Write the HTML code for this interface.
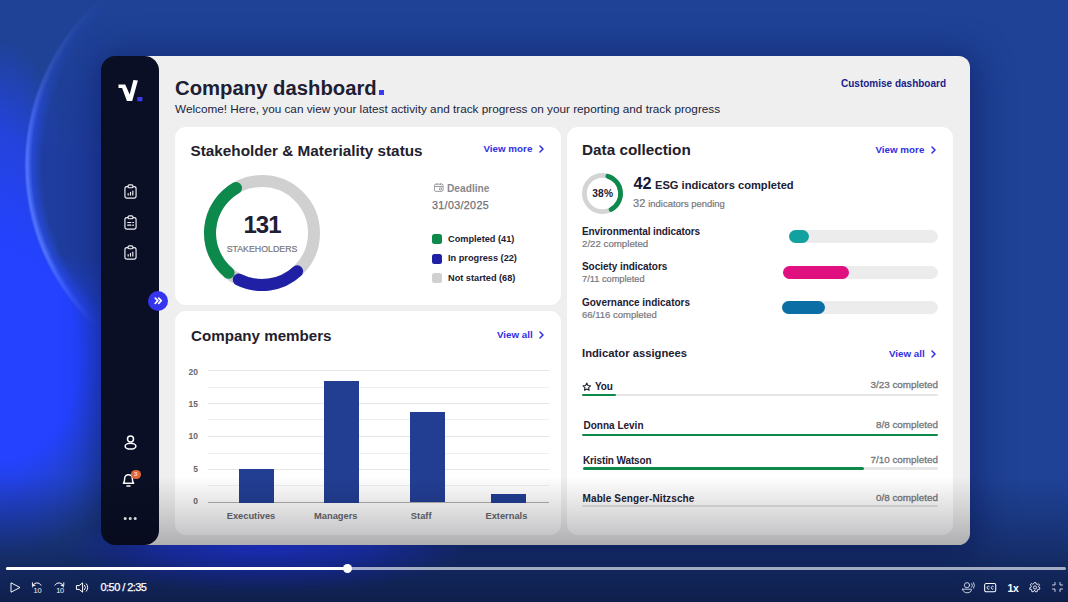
<!DOCTYPE html>
<html><head><meta charset="utf-8">
<style>
*{box-sizing:border-box;margin:0;padding:0}
html,body{width:1068px;height:602px;overflow:hidden}
body{font-family:"Liberation Sans",sans-serif;position:relative;background:#1f4296;color:#1d2033}
.abs{position:absolute}
#bg{left:0;top:0;width:1068px;height:602px;background:
 radial-gradient(ellipse 150px 202px at 0px 356px, rgba(36,66,255,1) 0%, rgba(36,66,255,1) 52%, rgba(36,66,255,.6) 70%, rgba(36,66,255,0) 100%),
 radial-gradient(ellipse 75px 190px at 0px 230px, rgba(38,68,252,.85) 0%, rgba(38,68,252,.7) 50%, rgba(38,68,252,0) 100%),
 #1f4296;}
#disc{left:24px;top:-59px;width:448px;height:448px;border-radius:50%;background:
 radial-gradient(circle closest-side, rgba(31,61,158,1) 0%, rgba(31,61,158,1) 92%, rgba(38,72,210,1) 96.500%, rgba(84,118,255,1) 98.700%, rgba(60,95,255,0) 100%);
 -webkit-mask-image:linear-gradient(to bottom,rgba(0,0,0,0) 12%,rgba(0,0,0,.3) 28%,#000 50%,#000 70%,rgba(0,0,0,0) 86%);mask-image:linear-gradient(to bottom,rgba(0,0,0,0) 12%,rgba(0,0,0,.3) 28%,#000 50%,#000 70%,rgba(0,0,0,0) 86%)}
#shadow{left:101px;top:56px;width:869px;height:489px;border-radius:18px;box-shadow:2px 3px 32px 7px rgba(12,22,90,.5)}
#main{left:140px;top:56px;width:830px;height:489px;background:#efefef;border-radius:0 11.500px 11.500px 0}
#side{left:101px;top:56px;width:58.200px;height:489px;background:#0a0f25;border-radius:14.500px}
.card{background:#fff;border-radius:11px}
.t{white-space:nowrap;line-height:1}
.b{font-weight:700}
.h2{font-weight:700;font-size:15.3px;color:#1f212d}
.link{font-weight:700;font-size:9.8px;color:#3131e2}
.g{color:#77777c}
.r{text-align:right}
svg{position:absolute;overflow:visible}
</style></head><body>
<div id="bg" class="abs"></div>
<div id="discw" class="abs" style="left:0;top:0;width:104px;height:602px;overflow:hidden"><div id="disc" class="abs"></div></div>
<div id="shadow" class="abs"></div>
<div id="glow" class="abs" style="left:60px;top:500px;width:420px;height:102px;background:radial-gradient(ellipse 200px 44px at 205px 50px, rgba(36,62,245,1) 0%, rgba(36,62,245,.68) 50%, rgba(36,62,245,0) 100%)"></div>
<div id="main" class="abs"></div>
<div id="side" class="abs"></div>

<!-- sidebar icons -->
<svg id="logo" style="left:118px;top:79px" width="26" height="24" viewBox="0 0 26 24">
 <path d="M0.500 5.500H7.200L11.700 15.600L15.400 1.100L19.900 1.400L14.200 22H8.900L4.100 9.100H0.500Z" fill="#fff"/>
 <rect x="19.300" y="18" width="5.100" height="4.300" rx=".6" fill="#3a3af0"/>
</svg>
<svg id="ic1" style="left:124px;top:183.8px" width="13" height="15" viewBox="0 0 14 17" preserveAspectRatio="none" fill="none" stroke="#f0f0f4" stroke-width="1.25" stroke-linecap="round" stroke-linejoin="round">
 <rect x="1" y="3" width="12" height="13" rx="2.2"/><rect x="4.4" y="1" width="5.2" height="3.2" rx="1.2" fill="#0a0f25"/>
 <path d="M4.500 12.600v-1.800M7 12.600v-3.200M9.500 12.600v-4.600"/>
</svg>
<svg id="ic2" style="left:124px;top:215.0px" width="13" height="15" viewBox="0 0 14 17" preserveAspectRatio="none" fill="none" stroke="#f0f0f4" stroke-width="1.25" stroke-linecap="round" stroke-linejoin="round">
 <rect x="1" y="3" width="12" height="13" rx="2.2"/><rect x="4.4" y="1" width="5.2" height="3.2" rx="1.2" fill="#0a0f25"/>
 <path d="M4 8.5h3.4M4 11.5h3.4M9.4 8.5h.8M9.4 11.5h.8"/>
</svg>
<svg id="ic3" style="left:124px;top:245.3px" width="13" height="15" viewBox="0 0 14 17" preserveAspectRatio="none" fill="none" stroke="#f0f0f4" stroke-width="1.25" stroke-linecap="round" stroke-linejoin="round">
 <rect x="1" y="3" width="12" height="13" rx="2.2"/><rect x="4.4" y="1" width="5.2" height="3.2" rx="1.2" fill="#0a0f25"/>
 <path d="M4.500 12.600v-1.800M7 12.600v-3.200M9.500 12.600v-4.600"/>
</svg>
<div id="exp" class="abs" style="left:147.5px;top:290.5px;width:20.4px;height:20.4px;border-radius:50%;background:#3535ee"></div>
<svg id="expi" style="left:153.5px;top:297px" width="8.600" height="7.400" viewBox="0 0 10 9" fill="none" stroke="#fff" stroke-width="2" stroke-linecap="round" stroke-linejoin="round"><path d="M1.300 1.300 4.400 4.500 1.300 7.700M5.500 1.300 8.600 4.500 5.500 7.700"/></svg>
<svg id="user" style="left:123.5px;top:435px" width="13" height="15" viewBox="0 0 13 15" fill="none" stroke="#fff" stroke-width="1.5"><circle cx="6.5" cy="4" r="3"/><ellipse cx="6.5" cy="11.2" rx="5.4" ry="2.9"/></svg>
<svg id="bell" style="left:120.8px;top:472.4px" width="15" height="16" viewBox="0 0 14 15" fill="none" stroke="#fff" stroke-width="1.4" stroke-linejoin="round" stroke-linecap="round"><path d="M2.2 10.5c1.2-1 1.2-2.6 1.2-4.3a3.6 3.6 0 0 1 7.2 0c0 1.700 0 3.300 1.200 4.300z"/><path d="M5.600 13.200h2.800"/></svg>
<div id="badge" class="abs" style="left:131px;top:469.500px;width:9.500px;height:9.500px;border-radius:50%;background:#e2683c"></div>
<div class="abs t b" style="left:131px;top:471px;width:9.500px;text-align:center;font-size:6px;color:#ffd9c8">3</div>
<svg id="dots" style="left:123px;top:516.4px" width="14" height="5" viewBox="0 0 14 5" fill="#fff"><circle cx="2.200" cy="2.500" r="1.500"/><circle cx="7.200" cy="2.500" r="1.500"/><circle cx="12.200" cy="2.500" r="1.500"/></svg>

<!-- header -->
<div id="title" class="abs t" style="left:175px;top:78px;font-size:20.3px;font-weight:700;color:#1d2033">Company dashboard</div>
<div id="dot" class="abs" style="left:379.300px;top:90.400px;width:4.500px;height:4.200px;background:#3a3af0"></div>
<div id="sub" class="abs t" style="left:175px;top:103px;font-size:11.750px;color:#20253d">Welcome! Here, you can view your latest activity and track progress on your reporting and track progress</div>
<div id="cust" class="abs t" style="left:841px;top:79px;font-size:10px;font-weight:700;color:#1b1c8a">Customise dashboard</div>

<!-- card 1 -->
<div id="c1" class="abs card" style="left:175px;top:127px;width:386px;height:178px"></div>
<div id="c1t" class="abs t h2" style="left:190.500px;top:143.300px">Stakeholder &amp; Materiality status</div>
<div id="c1l" class="abs t link" style="left:483.500px;top:144px">View more</div>
<svg class="chev" style="left:539px;top:145px" width="5" height="8" viewBox="0 0 5 8" fill="none" stroke="#3131e2" stroke-width="1.500" stroke-linecap="round" stroke-linejoin="round"><path d="M1 1l3 3-3 3"/></svg>
<svg id="donut" style="left:204px;top:175px" width="116" height="116" viewBox="-58 -58 116 116">
 <circle r="52" fill="none" stroke="#d0d0d0" stroke-width="12"/>
 <path id="garc" fill="none" stroke="#0d8a4b" stroke-width="12" stroke-linecap="round" d="M-33.42 39.83A52 52 0 0 1 -26.00 -45.03"/>
 <path id="barc" fill="none" stroke="#2020a4" stroke-width="12" stroke-linecap="round" d="M35.13 38.34A52 52 0 0 1 -23.20 46.54"/>
</svg>
<div id="n131" class="abs t b" style="left:232px;top:213px;width:60px;text-align:center;font-size:24px;letter-spacing:-1px;color:#1d2033">131</div>
<div id="stk" class="abs t" style="left:222px;top:244.500px;width:80px;text-align:center;font-size:8.800px;color:#77777c;-webkit-text-stroke:.2px #77777c">STAKEHOLDERS</div>
<svg id="cal" style="left:433.500px;top:182.7px" width="9.6" height="9" viewBox="0 0 10 9" fill="none" stroke="#95959a" stroke-width="1"><rect x=".5" y="1" width="9" height="7.500" rx="1.500"/><path d="M.5 3.500h9M3 0v2M7 0v2"/><circle cx="6.800" cy="6" r="1.200"/></svg>
<div id="dl" class="abs t b" style="left:447px;top:183.7px;font-size:10.200px;color:#88888c">Deadline</div>
<div id="dd" class="abs t" style="left:432px;top:200.1px;font-size:10.700px;letter-spacing:.35px;color:#707075;-webkit-text-stroke:.25px #707075">31/03/2025</div>
<div class="abs" style="left:432px;top:233.600px;width:10.200px;height:10px;border-radius:2.500px;background:#0d8a4b"></div>
<div class="abs" style="left:432px;top:253.600px;width:10.200px;height:10px;border-radius:2.500px;background:#2020a4"></div>
<div class="abs" style="left:432px;top:273.200px;width:10.200px;height:10px;border-radius:2.500px;background:#d0d0d0"></div>
<div id="lg1" class="abs t b" style="left:448px;top:234.500px;font-size:9.200px">Completed (41)</div>
<div id="lg2" class="abs t b" style="left:448px;top:254.400px;font-size:9.200px">In progress (22)</div>
<div id="lg3" class="abs t b" style="left:448px;top:274px;font-size:9.200px">Not started (68)</div>

<!-- card 2 -->
<div id="c2" class="abs card" style="left:175px;top:311.4px;width:386px;height:223.6px"></div>
<div id="c2t" class="abs t h2" style="left:191px;top:328px;font-size:15.15px">Company members</div>
<div id="c2l" class="abs t link" style="left:497px;top:330px">View all</div>
<svg class="chev" style="left:539px;top:331px" width="5" height="8" viewBox="0 0 5 8" fill="none" stroke="#3131e2" stroke-width="1.500" stroke-linecap="round" stroke-linejoin="round"><path d="M1 1l3 3-3 3"/></svg>
<div id="grid"></div>
<div class="abs" style="left:208px;top:370.1px;width:341px;height:1px;background:#e6e6e6"></div>
<div class="abs" style="left:208px;top:386.6px;width:341px;height:1px;background:#efefef"></div>
<div class="abs" style="left:208px;top:402.9px;width:341px;height:1px;background:#e6e6e6"></div>
<div class="abs" style="left:208px;top:419.4px;width:341px;height:1px;background:#efefef"></div>
<div class="abs" style="left:208px;top:435.8px;width:341px;height:1px;background:#e6e6e6"></div>
<div class="abs" style="left:208px;top:452.7px;width:341px;height:1px;background:#efefef"></div>
<div class="abs" style="left:208px;top:468.9px;width:341px;height:1px;background:#e6e6e6"></div>
<div class="abs" style="left:208px;top:485.2px;width:341px;height:1px;background:#efefef"></div>
<div class="abs" style="left:208px;top:502px;width:341px;height:1px;background:#b0b0b0"></div>
<div class="abs t b r" style="left:180px;top:367.7px;width:18px;font-size:8.500px;color:#68686c">20</div>
<div class="abs t b r" style="left:180px;top:399.9px;width:18px;font-size:8.500px;color:#68686c">15</div>
<div class="abs t b r" style="left:180px;top:431.8px;width:18px;font-size:8.500px;color:#68686c">10</div>
<div class="abs t b r" style="left:180px;top:464.5px;width:18px;font-size:8.500px;color:#68686c">5</div>
<div class="abs t b r" style="left:180px;top:496.8px;width:18px;font-size:8.500px;color:#68686c">0</div>
<div class="abs" style="left:238.500px;top:469px;width:35px;height:33.500px;background:#223e93"></div>
<div class="abs" style="left:324px;top:381px;width:34.500px;height:121.500px;background:#223e93"></div>
<div class="abs" style="left:409.800px;top:412.300px;width:35px;height:90.200px;background:#223e93"></div>
<div class="abs" style="left:491px;top:494px;width:35px;height:8.500px;background:#223e93"></div>
<div id="x1" class="abs t b g" style="left:211px;top:511.6px;width:80px;text-align:center;font-size:9.300px;color:#68686c">Executives</div>
<div id="x2" class="abs t b g" style="left:295.800px;top:511.6px;width:80px;text-align:center;font-size:9.300px;color:#68686c">Managers</div>
<div id="x3" class="abs t b g" style="left:381.200px;top:511.6px;width:80px;text-align:center;font-size:9.300px;color:#68686c">Staff</div>
<div id="x4" class="abs t b g" style="left:466.400px;top:511.6px;width:80px;text-align:center;font-size:9.300px;color:#68686c">Externals</div>

<!-- card 3 -->
<div id="c3" class="abs card" style="left:567px;top:127px;width:386px;height:408px"></div>
<div id="c3t" class="abs t h2" style="left:582px;top:142px">Data collection</div>
<div id="c3l" class="abs t link" style="left:875.500px;top:144.500px">View more</div>
<svg class="chev" style="left:931px;top:145.500px" width="5" height="8" viewBox="0 0 5 8" fill="none" stroke="#3131e2" stroke-width="1.500" stroke-linecap="round" stroke-linejoin="round"><path d="M1 1l3 3-3 3"/></svg>
<svg id="sd" style="left:582.250px;top:172.800px" width="41" height="41" viewBox="-20.500 -20.500 41 41">
 <circle r="18.100" fill="none" stroke="#d4d4d4" stroke-width="4.700"/>
 <path id="sarc" fill="none" stroke="#0d8a4b" stroke-width="4.700" stroke-linecap="round" d="M5.29 -17.31A18.1 18.1 0 0 1 8.50 15.98"/>
</svg>
<div id="p38" class="abs t b" style="left:582.7px;top:189.2px;width:40px;text-align:center;font-size:10.200px;letter-spacing:.2px">38%</div>
<div id="n42" class="abs t b" style="left:633.500px;top:175px;font-size:16.200px;color:#161a3a">42</div>
<div id="esg" class="abs t b" style="left:655px;top:179.500px;font-size:11.150px;color:#1d2033">ESG indicators completed</div>
<div id="pend" class="abs t g" style="left:633px;top:198px;font-size:9.45px;-webkit-text-stroke:.2px #77777c"><span style="font-size:11px;letter-spacing:.2px;position:relative;top:.3px">32</span> indicators pending</div>

<div id="e1" class="abs t b" style="left:582px;top:226.500px;font-size:10px;letter-spacing:-.08px">Environmental indicators</div>
<div id="e1s" class="abs t g" style="left:582px;top:238.8px;font-size:9.700px;-webkit-text-stroke:.2px #77777c">2/22 completed</div>
<div class="abs" style="left:789.200px;top:230.300px;width:148.600px;height:13px;border-radius:7px;background:#ececec"></div>
<div class="abs" style="left:789.200px;top:230.300px;width:20px;height:13px;border-radius:7px;background:#12a19f"></div>
<div id="e2" class="abs t b" style="left:582px;top:262px;font-size:10px;letter-spacing:-.05px">Society indicators</div>
<div id="e2s" class="abs t g" style="left:582px;top:274.500px;font-size:9.250px;-webkit-text-stroke:.2px #77777c">7/11 completed</div>
<div class="abs" style="left:783px;top:265.800px;width:154.800px;height:13px;border-radius:7px;background:#ececec"></div>
<div class="abs" style="left:783px;top:265.800px;width:65.800px;height:13px;border-radius:7px;background:#e01080"></div>
<div id="e3" class="abs t b" style="left:582px;top:297.500px;font-size:10px;letter-spacing:-.02px">Governance indicators</div>
<div id="e3s" class="abs t g" style="left:582px;top:309.7px;font-size:9.500px;-webkit-text-stroke:.2px #77777c">66/116 completed</div>
<div class="abs" style="left:782.200px;top:301.200px;width:155.600px;height:13px;border-radius:7px;background:#ececec"></div>
<div class="abs" style="left:782.200px;top:301.200px;width:42.800px;height:13px;border-radius:7px;background:#0b6fa6"></div>

<div id="ia" class="abs t b" style="left:582px;top:348.300px;font-size:11.250px">Indicator assignees</div>
<div id="ial" class="abs t link" style="left:889px;top:348.500px">View all</div>
<svg class="chev" style="left:930.500px;top:349.500px" width="5" height="8" viewBox="0 0 5 8" fill="none" stroke="#3131e2" stroke-width="1.500" stroke-linecap="round" stroke-linejoin="round"><path d="M1 1l3 3-3 3"/></svg>

<svg id="star" style="left:582.200px;top:381.700px" width="9.600" height="9.600" viewBox="0 0 24 24" fill="none" stroke="#1d2033" stroke-width="2.600" stroke-linejoin="round"><path d="M12 2.500l2.900 6.200 6.600.8-4.900 4.600 1.300 6.700L12 17.500l-5.900 3.300 1.300-6.700L2.500 9.500l6.600-.8z"/></svg>
<div id="a1" class="abs t b" style="left:595px;top:381.900px;font-size:10px;letter-spacing:-.1px">You</div>
<div id="a1r" class="abs t b g r" style="left:838px;top:380.2px;width:100px;font-size:9.9px;font-weight:400;-webkit-text-stroke:.3px #77777c">3/23 completed</div>
<div class="abs" style="left:582px;top:393.700px;width:356px;height:2.500px;border-radius:2px;background:#e6e6e6"></div>
<div class="abs" style="left:582px;top:393.700px;width:33.600px;height:2.500px;border-radius:2px;background:#0d8a4b"></div>

<div id="a2" class="abs t b" style="left:583.500px;top:421.400px;font-size:10px">Donna Levin</div>
<div id="a2r" class="abs t b g r" style="left:838px;top:420.4px;width:100px;font-size:9.9px;font-weight:400;-webkit-text-stroke:.3px #77777c">8/8 completed</div>
<div class="abs" style="left:582px;top:433.700px;width:356px;height:2.600px;border-radius:2px;background:#0d8a4b"></div>

<div id="a3" class="abs t b" style="left:583px;top:455.900px;font-size:10px;letter-spacing:-.12px">Kristin Watson</div>
<div id="a3r" class="abs t b g r" style="left:838px;top:454.8px;width:100px;font-size:9.9px;font-weight:400;-webkit-text-stroke:.3px #77777c">7/10 completed</div>
<div class="abs" style="left:583px;top:467.400px;width:355px;height:2.600px;border-radius:2px;background:#e6e6e6"></div>
<div class="abs" style="left:583px;top:467.400px;width:280.500px;height:2.600px;border-radius:2px;background:#0d8a4b"></div>

<div id="a4" class="abs t b" style="left:582.500px;top:493.500px;font-size:10px;letter-spacing:.12px">Mable Senger-Nitzsche</div>
<div id="a4r" class="abs t b g r" style="left:838px;top:492.5px;width:100px;font-size:9.9px;font-weight:400;-webkit-text-stroke:.3px #77777c">0/8 completed</div>
<div class="abs" style="left:582px;top:504.600px;width:356px;height:2.400px;border-radius:2px;background:#e3e3e3"></div>

<!-- overlay -->
<div id="ov" class="abs" style="left:0;top:476px;width:1068px;height:126px;background:linear-gradient(to bottom,rgba(0,0,10,0) 0%,rgba(0,0,10,.13) 28%,rgba(0,0,10,.27) 55%,rgba(0,0,10,.42) 78%,rgba(0,0,10,.53) 100%)"></div>

<!-- video controls -->
<div class="abs" style="left:6px;top:567px;width:1059.5px;height:3px;border-radius:2px;background:rgba(255,255,255,.62)"></div>
<div class="abs" style="left:6px;top:567px;width:342px;height:3px;border-radius:2px;background:#fff"></div>
<div class="abs" style="left:343px;top:564px;width:9px;height:9px;border-radius:50%;background:#fff"></div>
<svg id="play" style="left:10px;top:582px" width="11" height="11" viewBox="0 0 11 11" fill="none" stroke="#fff" stroke-width=".95" stroke-linejoin="round"><path d="M1 .8v9.400L10 5.500z"/></svg>
<svg id="rw" style="left:31px;top:581px" width="12" height="13" viewBox="0 0 12 13" fill="none" stroke="#fff" stroke-width="1" stroke-linecap="round" stroke-linejoin="round"><path d="M1.500 6a4.600 4.600 0 0 1 8.600-1.800"/><path d="M1.200 2.200v2.600h2.600" transform="translate(.2 -.4)"/></svg>
<div class="abs t" style="left:33.600px;top:586.900px;font-size:7.400px;letter-spacing:-.3px;color:#f2f3f8">10</div>
<svg id="fw" style="left:53px;top:581px" width="12" height="13" viewBox="0 0 12 13" fill="none" stroke="#fff" stroke-width="1" stroke-linecap="round" stroke-linejoin="round"><path d="M10.500 6a4.600 4.600 0 0 0-8.600-1.800"/><path d="M10.800 1.800v2.600H8.200"/></svg>
<div class="abs t" style="left:56.200px;top:586.900px;font-size:7.400px;letter-spacing:-.3px;color:#f2f3f8">10</div>
<svg id="vol" style="left:76px;top:582px" width="13" height="11" viewBox="0 0 13 11" fill="none" stroke="#fff" stroke-width="1" stroke-linejoin="round" stroke-linecap="round"><path d="M.8 3.600h2.400L6.600.8v9.400L3.200 7.400H.8z"/><path d="M8.600 3.400a3 3 0 0 1 0 4.200M10.300 1.800a5.200 5.200 0 0 1 0 7.400"/></svg>
<div id="time" class="abs t" style="left:100.500px;top:582px;font-size:11px;color:#fff;letter-spacing:-.55px;-webkit-text-stroke:.25px #fff">0:50 / 2:35</div>

<svg id="pv" style="left:962px;top:581.500px" width="14" height="12" viewBox="0 0 14 12" fill="none" stroke="#e6e8f2" stroke-width=".85" stroke-linecap="round"><circle cx="5" cy="3.200" r="2.600"/><path d="M.6 7.200h8.800a4.400 3.600 0 0 1-8.800 0z" stroke-linejoin="round"/><path d="M9.800 1.600a3 3 0 0 1 0 3.600M11.600.6a5 5 0 0 1 0 5.600"/></svg>
<svg id="cc" style="left:984px;top:582.6px" width="12.4" height="9.4" viewBox="0 0 13 10" fill="none" stroke="#fff" stroke-width="1.100"><rect x=".6" y=".6" width="11.800" height="8.800" rx="1.600"/><path d="M5.600 3.800a1.500 1.500 0 1 0 0 2.400M10 3.800a1.500 1.500 0 1 0 0 2.400" stroke-width="1"/></svg>
<div id="onex" class="abs t b" style="left:1007.500px;top:582.500px;font-size:10.500px;color:#fff;letter-spacing:-.3px">1x</div>
<svg id="gear" style="left:1029px;top:581px" width="12" height="13" viewBox="0 0 24 24" fill="none" stroke="#fff" stroke-width="1.7" stroke-linejoin="round"><circle cx="12" cy="12" r="3.200"/><path d="M10.300 2h3.400l.6 2.900 1.900.9 2.600-1.500 2.100 2.700-2 2 .3 2 2.500 1.500-1.200 3.200-2.900-.4-1.500 1.400.3 3-3.300.9-1.400-2.600h-2l-1.600 2.500-3.200-1.100.4-2.900-1.400-1.500-3 .3L1.500 12l2.600-1.400.2-2-2-2.200 2-2.600 2.700 1.300 1.800-.9z" transform="translate(0.300,0.300)"/></svg>
<svg id="mini" style="left:1052px;top:582px" width="11" height="10" viewBox="0 0 11 10" fill="none" stroke="#eef0f8" stroke-width=".85" stroke-linecap="round" stroke-linejoin="round"><path d="M.5 3h2.500V.5M10.500 3H8V.5M.5 7h2.500v2.500M10.500 7H8v2.500"/></svg>

</body></html>
